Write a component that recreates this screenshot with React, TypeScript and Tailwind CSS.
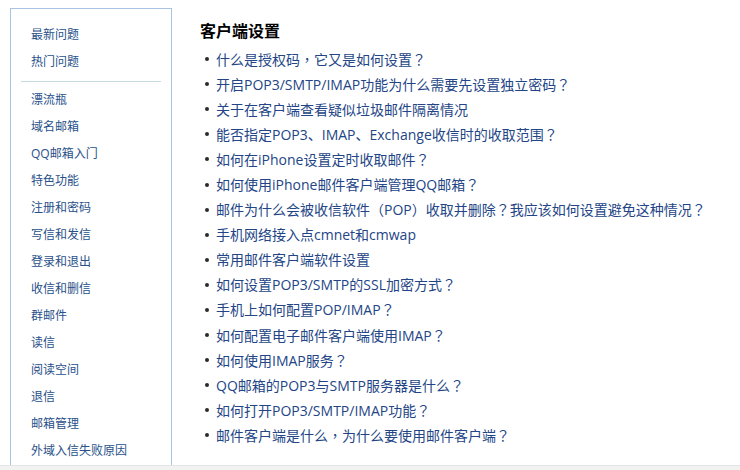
import React from "react";

const side1 = ["最新问题", "热门问题"];
const side2 = [
  "漂流瓶",
  "域名邮箱",
  "QQ邮箱入门",
  "特色功能",
  "注册和密码",
  "写信和发信",
  "登录和退出",
  "收信和删信",
  "群邮件",
  "读信",
  "阅读空间",
  "退信",
  "邮箱管理",
  "外域入信失败原因",
];

const items = [
  "什么是授权码，它又是如何设置？",
  "开启POP3/SMTP/IMAP功能为什么需要先设置独立密码？",
  "关于在客户端查看疑似垃圾邮件隔离情况",
  "能否指定POP3、IMAP、Exchange收信时的收取范围？",
  "如何在iPhone设置定时收取邮件？",
  "如何使用iPhone邮件客户端管理QQ邮箱？",
  "邮件为什么会被收信软件（POP）收取并删除？我应该如何设置避免这种情况？",
  "手机网络接入点cmnet和cmwap",
  "常用邮件客户端软件设置",
  "如何设置POP3/SMTP的SSL加密方式？",
  "手机上如何配置POP/IMAP？",
  "如何配置电子邮件客户端使用IMAP？",
  "如何使用IMAP服务？",
  "QQ邮箱的POP3与SMTP服务器是什么？",
  "如何打开POP3/SMTP/IMAP功能？",
  "邮件客户端是什么，为什么要使用邮件客户端？",
];

function Text({ t }: { t: string }) {
  const parts = t.split(/([，？（）])/);
  return (
    <>
      {parts.map((p, i) =>
        /^[，？（）]$/.test(p) ? (
          <span key={i} className="font-['Noto_Sans_CJK_TC']">
            {p}
          </span>
        ) : (
          <React.Fragment key={i}>{p}</React.Fragment>
        )
      )}
    </>
  );
}

export default function App() {
  return (
    <div
      className="w-[740px] h-[470px] bg-white flex flex-col overflow-hidden"
      style={{ fontFamily: '"Open Sans", "Noto Sans CJK SC", sans-serif' }}
    >
      <div className="flex flex-1 min-h-0">
        <div className="ml-[10px] mt-[8px] w-[162px] border border-b-0 border-[#a9c4e2] flex flex-col pt-[12.5px]">
          {side1.map((t) => (
            <div key={t} className="h-[27px] flex items-center pl-[20px] text-[12px] text-[#28508a]">
              {t}
            </div>
          ))}
          <div className="mx-[10px] mt-[5px] h-px bg-[#c6dae2]" />
          <div className="pt-[5px]">
            {side2.map((t) => (
              <div key={t} className="h-[27px] flex items-center pl-[20px] text-[12px] text-[#28508a]">
                {t}
              </div>
            ))}
          </div>
        </div>
        <div className="ml-[28px] pt-[19px]">
          <div className="h-[24px] flex items-center text-[16px] font-bold text-black">客户端设置</div>
          <ul className="mt-[3.5px]">
            {items.map((t) => (
              <li key={t} className="h-[25.1px] flex items-center text-[14px] text-[#234586] whitespace-nowrap">
                <span className="ml-[5px] mr-[7px] w-[4px] h-[4px] rounded-full bg-[#2b2b2b] shrink-0" />
                <span>
                  <Text t={t} />
                </span>
              </li>
            ))}
          </ul>
        </div>
      </div>
      <div className="h-[5px] bg-[#f2f2f2] border-t border-[#e4e4e4] shrink-0" />
    </div>
  );
}
